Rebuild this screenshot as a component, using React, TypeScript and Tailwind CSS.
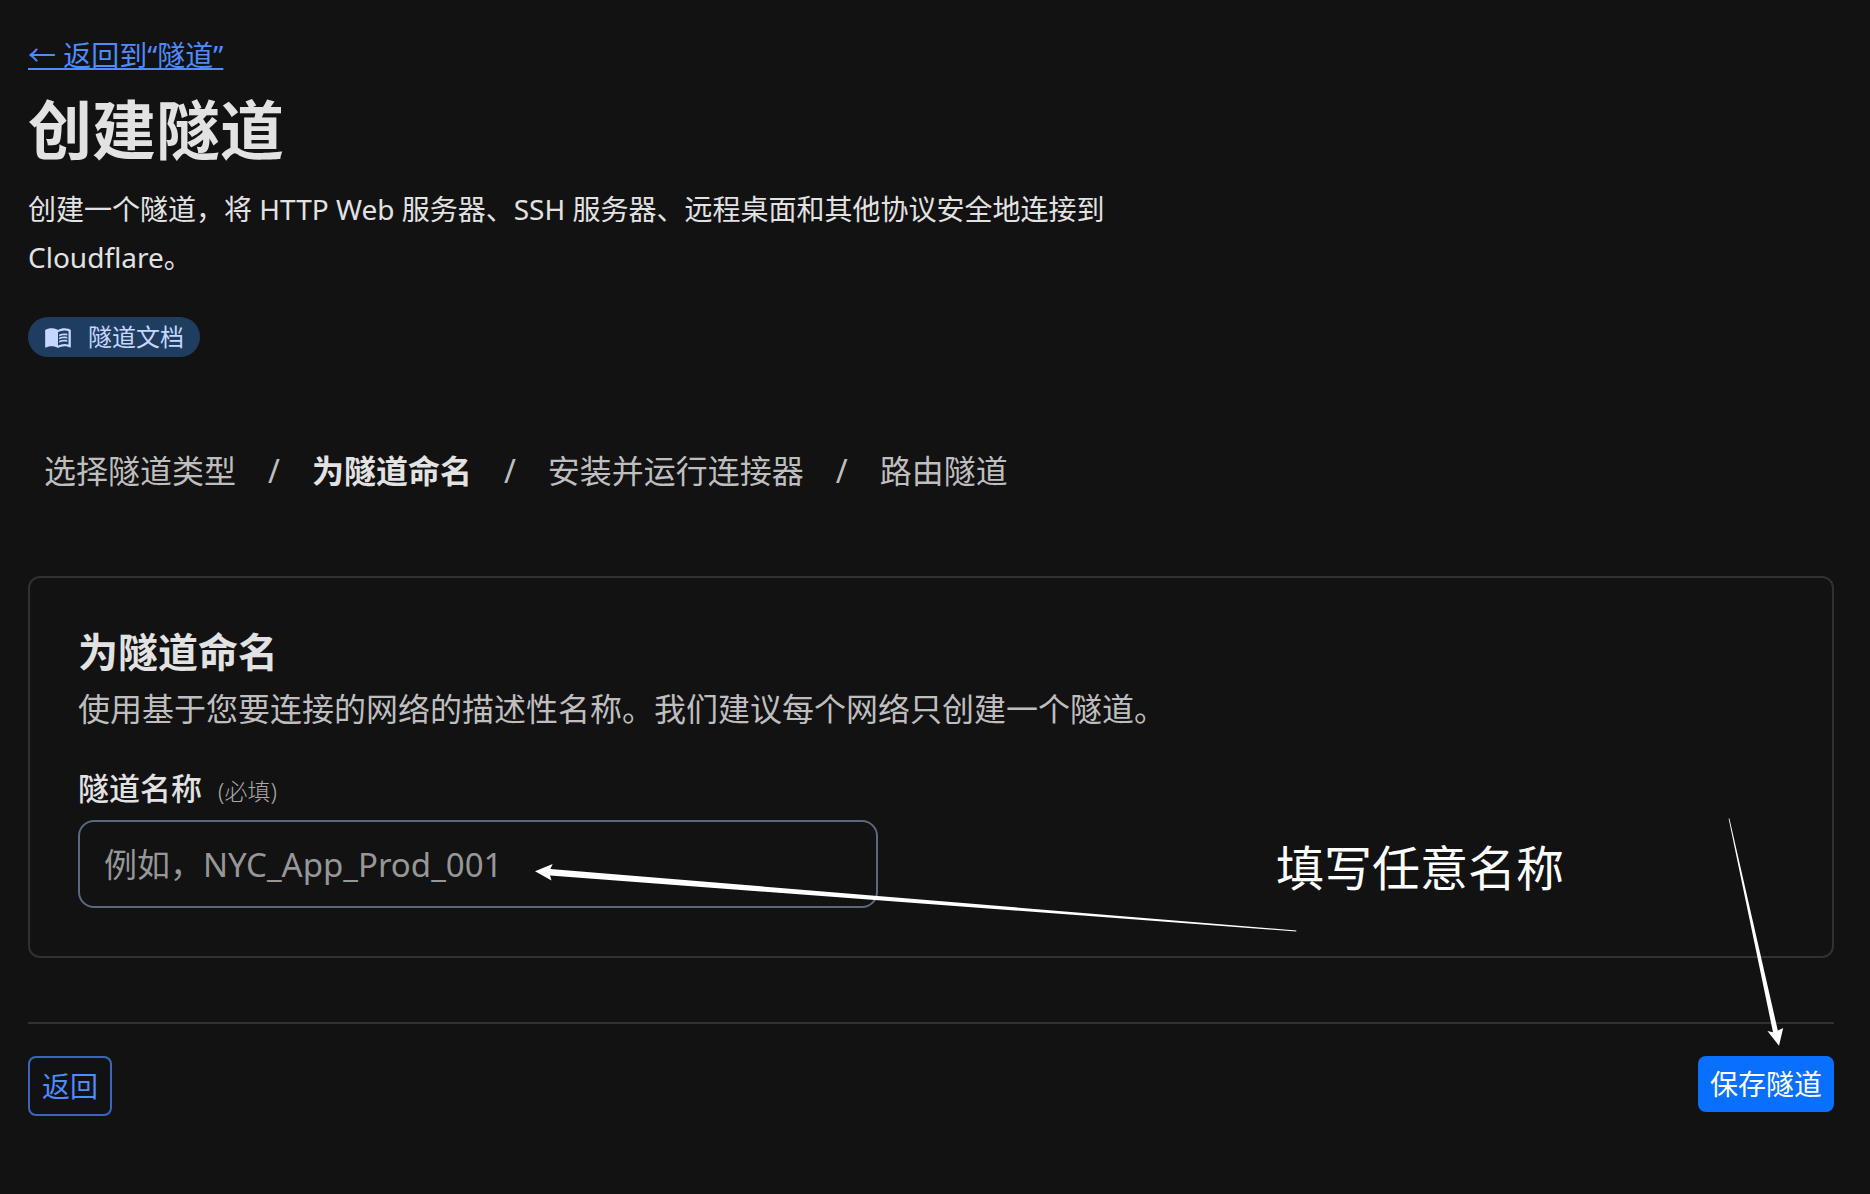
import { Fragment } from "react";
import { MdMenuBook } from "react-icons/md";

const steps = [
  { label: "选择隧道类型", current: false },
  { label: "为隧道命名", current: true },
  { label: "安装并运行连接器", current: false },
  { label: "路由隧道", current: false },
];

function StepTrail() {
  return (
    <nav aria-label="步骤" className="mt-20 px-4">
      <ol className="flex items-center gap-8 text-[32px] leading-[68px] text-[#bebebe]">
        {steps.map((step, index) => (
          <Fragment key={step.label}>
            {index > 0 && <li aria-hidden="true">/</li>}
            <li
              aria-current={step.current ? "step" : undefined}
              className={step.current ? "font-bold text-[#e2e2e2]" : ""}
            >
              {step.label}
            </li>
          </Fragment>
        ))}
      </ol>
    </nav>
  );
}

function NameCard() {
  return (
    <section className="relative mt-[71px] rounded-xl border-2 border-[#313131] px-12 pt-11 pb-12">
      <h2 className="text-[40px] leading-[60px] font-bold text-[#e2e2e2]">为隧道命名</h2>
      <p className="text-[32px] leading-[54px] text-[#bebebe]">
        使用基于您要连接的网络的描述性名称。我们建议每个网络只创建一个隧道。
      </p>
      <label htmlFor="tunnel-name" className="mt-[26px] flex items-baseline gap-4 leading-[52px]">
        <span className="text-[31px] font-medium text-[#e2e2e2]">隧道名称</span>
        <span className="text-[23px] font-light text-[#a8a8a8]">(必填)</span>
      </label>
      <input
        id="tunnel-name"
        type="text"
        required
        placeholder="例如，NYC_App_Prod_001"
        className="mt-[3px] block h-[88px] w-full max-w-[800px] rounded-2xl border-2 border-[#5b6880] bg-transparent px-6 text-[33px] text-[#e2e2e2] placeholder:text-[#979797] placeholder:opacity-100"
      />
      <svg
        aria-hidden="true"
        className="absolute top-[284px] left-[504px] h-[72px] w-[764px]"
        viewBox="534 863 764 72"
        fill="#fff"
      >
        <path d="M535 872.2 552.7 865 550.3 870 1296.3 931.5 1296.3 932.5 550 876.6 551.5 881.5Z" />
      </svg>
      <p className="absolute right-[268px] bottom-[52px] text-[48px] leading-[72px] text-white">
        填写任意名称
      </p>
    </section>
  );
}

export default function App() {
  return (
    <main
      lang="zh-CN"
      className="min-h-screen bg-[#121212] pt-[31px] pr-9 pl-7 font-['Noto_Sans','Noto_Sans_CJK_SC',sans-serif]"
    >
      <header>
        <a
          href="#tunnels"
          className="inline-block text-[28px] leading-[48px] text-[#4e8bfd] underline decoration-2 underline-offset-2"
        >
          ← 返回到“隧道”
        </a>
        <h1 className="mt-1 text-[64px] leading-[94px] font-bold text-[#e2e2e2]">创建隧道</h1>
        <p className="mt-2 max-w-[1100px] text-[28px] leading-[48px] text-[#e2e2e2]">
          创建一个隧道，将 HTTP Web 服务器、SSH 服务器、远程桌面和其他协议安全地连接到 Cloudflare。
        </p>
        <a
          href="#docs"
          className="mt-9 flex h-10 w-fit items-center gap-4 rounded-full bg-[#1f3d5f] px-4 text-[24px] text-[#c5d7ff]"
        >
          <MdMenuBook className="size-7" aria-hidden="true" />
          隧道文档
        </a>
      </header>

      <StepTrail />
      <NameCard />

      <footer className="relative mt-16 flex items-start justify-between border-t-2 border-[#313131] pt-8">
        <button
          type="button"
          className="h-[60px] rounded-lg border-2 border-[#3a67b8] px-3 text-[28px] text-[#4e8bfd]"
        >
          返回
        </button>
        <button
          type="button"
          className="h-14 rounded-lg bg-[#086fff] px-3 text-[28px] text-white"
        >
          保存隧道
        </button>
        <svg
          aria-hidden="true"
          className="absolute right-[49px] bottom-[68px] h-[232px] w-[58px]"
          viewBox="1727 817 58 232"
          fill="#fff"
        >
          <path d="M1779 1046.8 1783.2 1029 1777.8 1031.5 1729.4 819.5 1728.6 819.5 1773 1033.3 1767.4 1032Z" />
        </svg>
      </footer>
    </main>
  );
}
